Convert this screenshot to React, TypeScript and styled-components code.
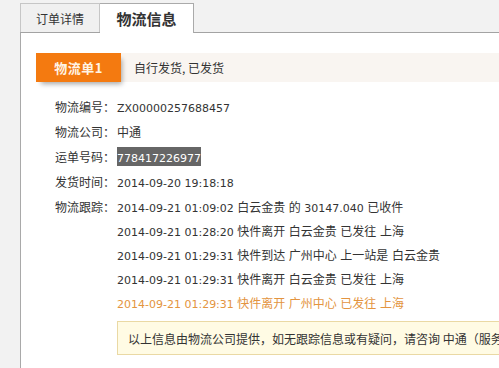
import { Fragment } from "react";
import styled, { createGlobalStyle } from "styled-components";

const GlobalStyle = createGlobalStyle`
  html, body {
    margin: 0;
    padding: 0;
    background: #f2f2f2;
    overflow: hidden;
  }
  body {
    font-family: "Noto Sans CJK SC", sans-serif;
    font-size: 12px;
    color: #333;
  }
`;

const infoRows = [
  { label: "物流编号：", value: "ZX00000257688457" },
  { label: "物流公司：", value: "中通" },
  { label: "运单号码：", value: "778417226977", mark: true },
  { label: "发货时间：", value: "2014-09-20 19:18:18" },
];

const tracks = [
  "2014-09-21 01:09:02 白云金贵 的 30147.040 已收件",
  "2014-09-21 01:28:20 快件离开 白云金贵 已发往 上海",
  "2014-09-21 01:29:31 快件到达 广州中心 上一站是 白云金贵",
  "2014-09-21 01:29:31 快件离开 白云金贵 已发往 上海",
  "2014-09-21 01:29:31 快件离开 广州中心 已发往 上海",
];

// latin runs use a verdana-like face at 11px, cjk stays 12px
function mixed(text: string) {
  return text.split(/([\x20-\x7E]+)/).map((part, i) =>
    /^[\x20-\x7E]+$/.test(part) ? <Latin key={i}>{part}</Latin> : <Fragment key={i}>{part}</Fragment>
  );
}

export default function App() {
  return (
    <Page>
      <GlobalStyle />
      <TabBar>
        <Tab>订单详情</Tab>
        <Tab $active>物流信息</Tab>
      </TabBar>
      <Panel>
        <Band>
          <Badge>物流单1</Badge>
          <BandText>自行发货, 已发货</BandText>
        </Band>
        <InfoGrid>
          {infoRows.map((row) => (
            <Fragment key={row.label}>
              <Label>{row.label}</Label>
              <Value>{row.mark ? <Marked>{mixed(row.value)}</Marked> : mixed(row.value)}</Value>
            </Fragment>
          ))}
          <Label>物流跟踪：</Label>
          <TrackList>
            {tracks.map((t, i) => (
              <TrackLine key={i} $latest={i === tracks.length - 1} $first={i === 0}>
                {mixed(t)}
              </TrackLine>
            ))}
            <Notice>以上信息由物流公司提供，如无跟踪信息或有疑问，请咨询 中通（服务热线）</Notice>
          </TrackList>
        </InfoGrid>
      </Panel>
    </Page>
  );
}

const Page = styled.div`
  width: 499px;
  height: 368px;
  padding: 3px 0 0 20px;
  box-sizing: border-box;
  display: flex;
  flex-direction: column;
  overflow: hidden;
`;

const TabBar = styled.div`
  display: flex;
  align-items: flex-end;
  height: 30px;
  position: relative;
  z-index: 1;
`;

const Tab = styled.div<{ $active?: boolean }>`
  box-sizing: border-box;
  height: ${(p) => (p.$active ? "30px" : "29px")};
  width: ${(p) => (p.$active ? "94px" : "80px")};
  margin-bottom: ${(p) => (p.$active ? "0" : "1px")};
  border: 1px solid ${(p) => (p.$active ? "#aaa" : "#c6c6c6")};
  border-bottom: none;
  border-left: ${(p) => (p.$active ? "none" : "1px solid #c6c6c6")};
  background: ${(p) => (p.$active ? "#fff" : "#f0f0f0")};
  display: flex;
  align-items: center;
  justify-content: center;
  font-size: ${(p) => (p.$active ? "15px" : "12px")};
  font-weight: ${(p) => (p.$active ? 700 : 400)};
  color: #333;
`;

const Panel = styled.div`
  flex: 1;
  margin-top: -1px;
  background: #fff;
  border-top: 1px solid #a3a3a3;
  border-left: 1px solid #a9a9a9;
  padding: 20px 0 0 15px;
`;

const Band = styled.div`
  display: flex;
  align-items: center;
  height: 29px;
  background: #f9f5f1;
`;

const Badge = styled.div`
  width: 85px;
  height: 29px;
  background: #f47a10;
  color: #fff4e6;
  font-weight: 700;
  font-size: 13px;
  letter-spacing: 0.5px;
  display: flex;
  align-items: center;
  justify-content: center;
  box-shadow: 3px 4px 5px -2px rgba(0, 0, 0, 0.35);
`;

const BandText = styled.span`
  margin-left: 13px;
  color: #333;
`;

const InfoGrid = styled.div`
  display: grid;
  grid-template-columns: 62px 1fr;
  grid-auto-rows: 25px;
  margin: 12px 0 0 19px;
  align-items: center;
`;

const Label = styled.div`
  line-height: 25px;
  align-self: start;
  white-space: nowrap;
`;

const Value = styled.div`
  white-space: nowrap;
`;

const Latin = styled.span`
  font-family: "DejaVu Sans", sans-serif;
  font-size: 11px;
`;

const Marked = styled.span`
  display: inline-block;
  height: 19px;
  line-height: 19px;
  background: #666;
  color: #fff;
`;

const TrackList = styled.div`
  grid-row: span 5;
  align-self: start;
  display: flex;
  flex-direction: column;
`;

const TrackLine = styled.div<{ $latest?: boolean; $first?: boolean }>`
  height: ${(p) => (p.$first ? "25px" : "24px")};
  line-height: ${(p) => (p.$first ? "25px" : "24px")};
  white-space: nowrap;
  color: ${(p) => (p.$latest ? "#e39440" : "#333")};
`;

const Notice = styled.div`
  margin-top: 6px;
  width: 440px;
  height: 34px;
  box-sizing: border-box;
  padding-left: 10px;
  display: flex;
  align-items: center;
  white-space: nowrap;
  background: #fffbe4;
  border: 1px solid #ead9a4;
  color: #333;
`;
